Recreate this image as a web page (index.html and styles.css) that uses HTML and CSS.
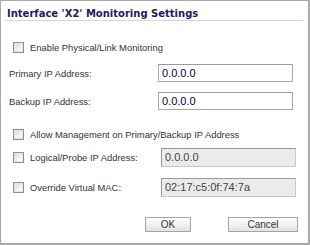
FILE: index.html
```html
<!DOCTYPE html>
<html>
<head>
<meta charset="utf-8">
<link rel="stylesheet" href="styles.css">
</head>
<body>
<div class="dialog">
  <div class="title">Interface 'X2' Monitoring Settings</div>
  <div class="body">
    <div class="row r1">
      <span class="cb"></span><span class="label">Enable Physical/Link Monitoring</span>
    </div>
    <div class="row r2">
      <span class="label plain">Primary IP Address:</span>
      <span class="input">0.0.0.0</span>
    </div>
    <div class="row r3">
      <span class="label plain">Backup IP Address:</span>
      <span class="input">0.0.0.0</span>
    </div>
    <div class="row r4">
      <span class="cb"></span><span class="label">Allow Management on Primary/Backup IP Address</span>
    </div>
    <div class="row r5">
      <span class="cb"></span><span class="label grow">Logical/Probe IP Address:</span>
      <span class="input disabled">0.0.0.0</span>
    </div>
    <div class="row r6">
      <span class="cb"></span><span class="label grow">Override Virtual MAC:</span>
      <span class="input disabled">02:17:c5:0f:74:7a</span>
    </div>
    <div class="buttons">
      <span class="btn ok">OK</span>
      <span class="btn cancel">Cancel</span>
    </div>
  </div>
</div>
</body>
</html>
```
FILE: styles.css
```css
html, body { margin: 0; padding: 0; background: #fff; }
.dialog {
  width: 310px; height: 245px; box-sizing: border-box;
  border: 1px solid #a8a8a8; border-right-width: 2px; border-bottom-width: 2px;
  font-family: Tahoma, "Liberation Sans", sans-serif;
  font-size: 9.4px; color: #333;
  display: flex; flex-direction: column;
}
.title {
  margin: 0 5px; height: 19px; border-bottom: 1px solid #d6d6d6;
  font-family: Verdana, "DejaVu Sans", sans-serif; font-weight: bold; font-size: 10px;
  color: #1c1c5c; line-height: 26px; padding-left: 1px; overflow: hidden;
}
.body { display: flex; flex-direction: column; }
.row { display: flex; align-items: center; height: 18px; }
.r1 { margin-top: 17px; }
.r2 { margin-top: 8px; }
.r3 { margin-top: 10px; }
.r4 { margin-top: 15px; }
.r5 { margin-top: 5px; }
.r6 { margin-top: 12px; }
.cb {
  width: 9px; height: 9px; margin-left: 12px; margin-right: 6px;
  border: 1px solid #8e8e8e;
  background: linear-gradient(135deg, #d4d4d4 0%, #f4f4f4 60%, #ffffff 100%);
  box-shadow: inset 0 0 0 1px #e6e6e6;
  flex: none;
}
.label { white-space: nowrap; }
.label.plain { margin-left: 8px; width: 149px; }
.label.grow { width: 131px; }
.input {
  width: 135px; height: 18px; box-sizing: border-box;
  border: 1px solid #a9a9a9; border-top-color: #9a9a9a;
  padding-left: 3px; line-height: 16px; color: #000040;
  font-size: 11px; flex: none;
}
.input.disabled {
  background: #ebebeb; color: #444;
  border-color: #c8c8c8; border-top-color: #999; border-left-color: #999;
  height: 19px; line-height: 17px;
}
.buttons {
  display: flex; justify-content: flex-end; margin-top: 21px; padding-right: 10px; gap: 37px;
}
.btn {
  height: 15px; box-sizing: border-box; border: 1px solid #a4a4a4;
  background: linear-gradient(#ffffff, #f2f2f2 50%, #e2e2e2);
  text-align: center; line-height: 13px; color: #333; font-size: 10px;
}
.ok { width: 46px; }
.cancel { width: 70px; }
```
